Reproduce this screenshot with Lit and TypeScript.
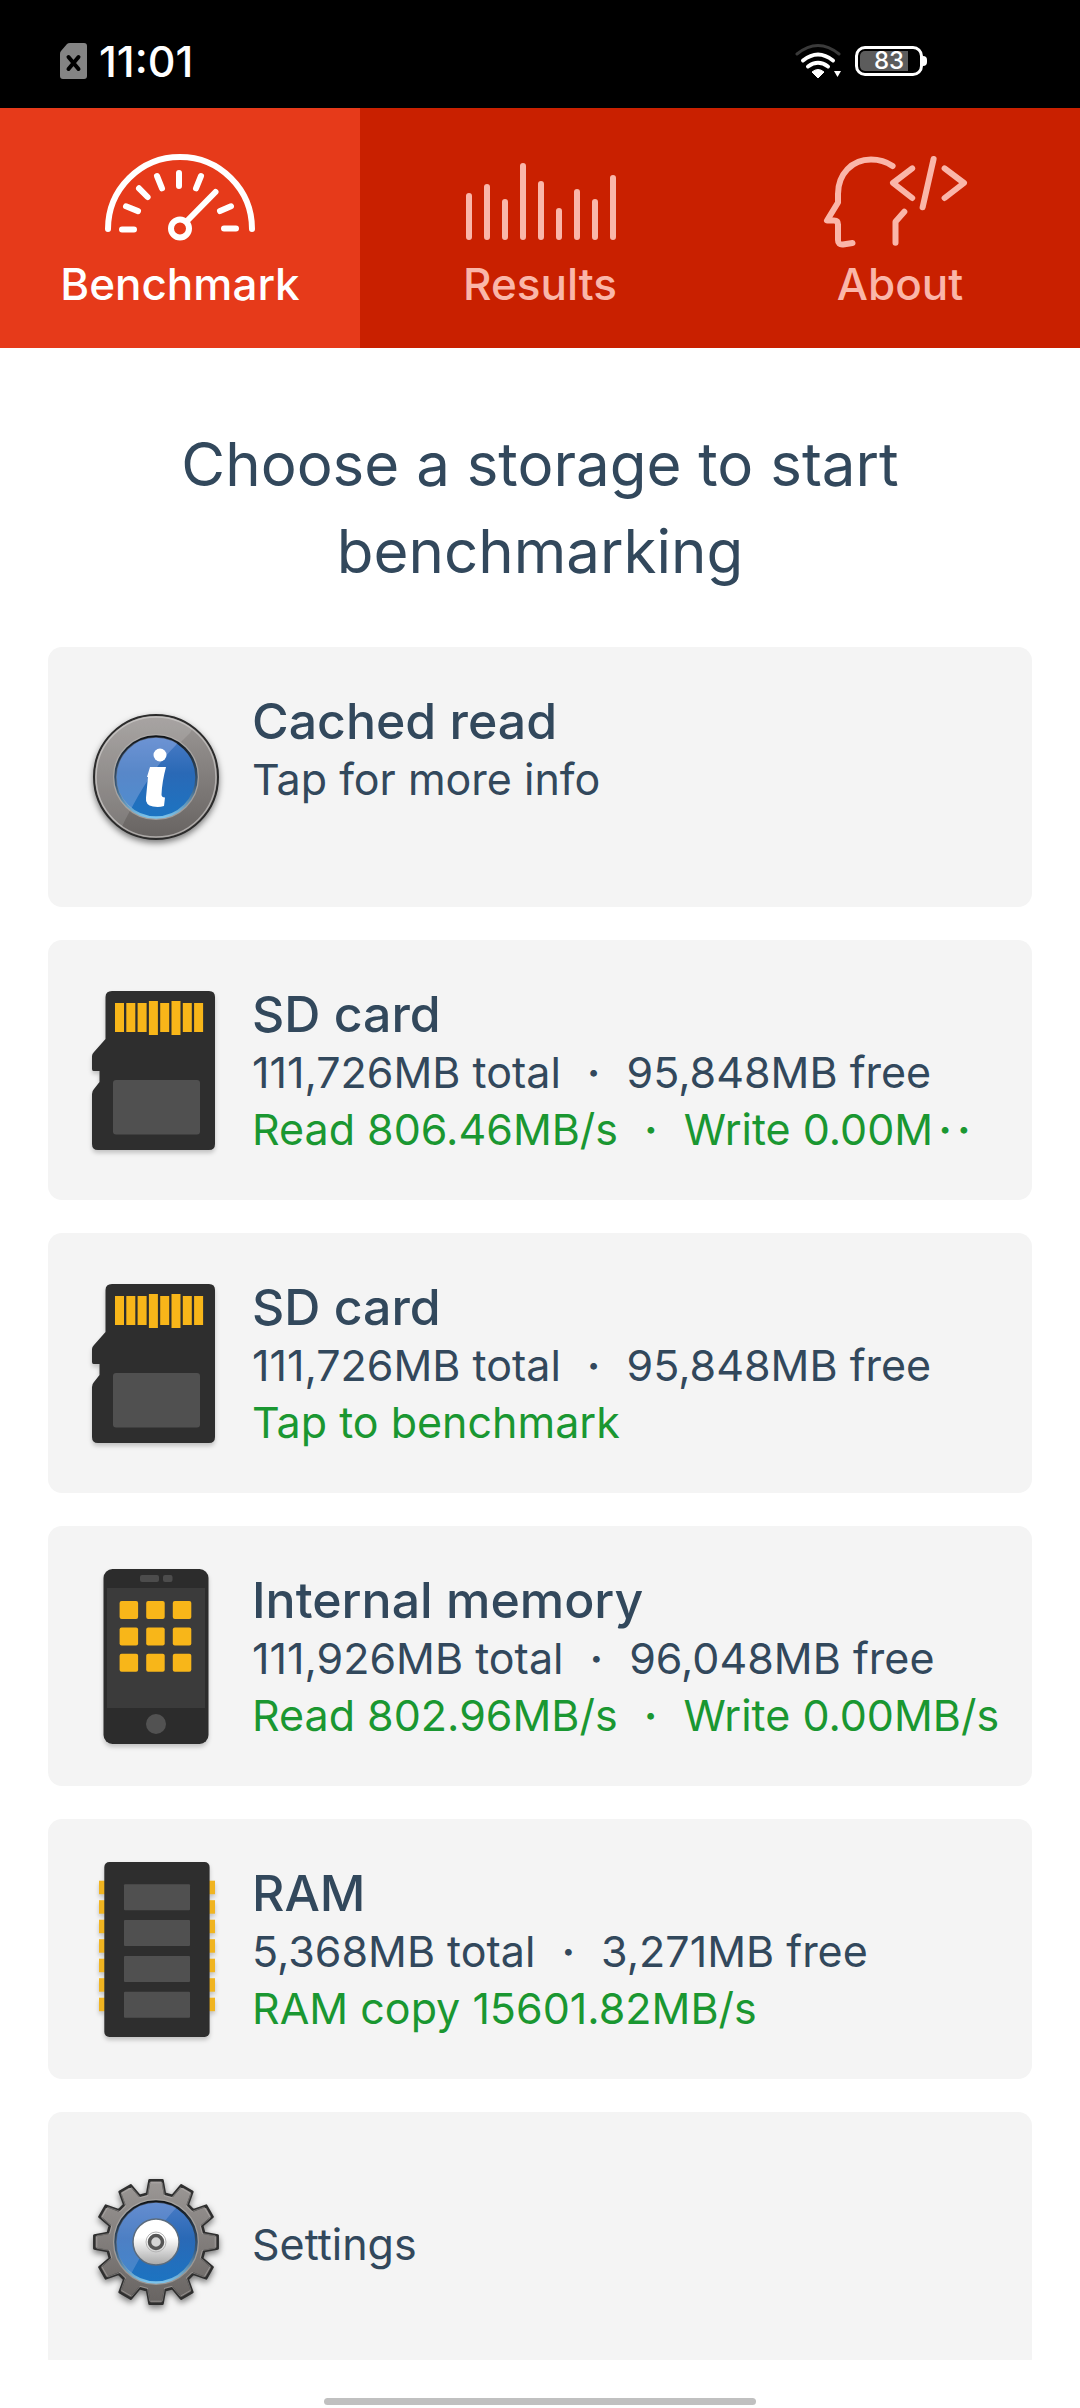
import { LitElement, html, svg, css, nothing } from "lit";
import type { SVGTemplateResult } from "lit";
import { customElement, property, state } from "lit/decorators.js";
import { classMap } from "lit/directives/class-map.js";

type IconName = "info" | "sd" | "phone" | "ram" | "gear";

interface StorageItem {
  icon: IconName;
  title?: string;
  detail: string[];
  result?: string[];
  clipped?: boolean;
}

const range = (n: number) => Array.from({ length: n }, (_, i) => i);

/* ---------- tab icons, 160 x 100 ---------- */

const gaugeIcon = svg`
  <path d="M8 79a72 72 0 0 1 144 0"/>
  <circle cx="80" cy="78.500" r="9"/>
  <path d="M86.500 71.500 115.500 42"/>
  <path d="M22 79.500h12M26 56.300l12 4.800M39 38.300l8.600 8.700M57 26l5 12.300M79 23v13M101 26l-5 12.300M131 56.300l-11 4.800M124 78.500h12"/>`;

const barTops = [46, 37, 52, 16, 34, 61, 42, 52, 28];
const barsIcon = svg`<path d=${barTops.map((top, i) => `M${9 + i * 18} ${top}V87`).join("")}/>`;

const aboutIcon = svg`
  <path d="M72.600 16C66 11.500 59 9.500 51 9.500 32 9.500 18 24 18 44v8.500L7 70.500h7q4 0 4 4V90q0 5 5 4.500l9.500-1.500"/>
  <path d="M84.300 61.700 75.500 71.700v21"/>
  <path d="M92.200 18.300 73 33l19.200 15M113.600 9 102.600 57.300M124.600 18.300 144 33l-19.400 15"/>`;

const tabs: { label: string; icon: SVGTemplateResult }[] = [
  { label: "Benchmark", icon: gaugeIcon },
  { label: "Results", icon: barsIcon },
  { label: "About", icon: aboutIcon },
];

/* ---------- card icons, 128 x 180 ---------- */

const metalDefs = svg`
  <defs>
    <linearGradient id="metal" x1="0" y1="0" x2="0" y2="1">
      <stop offset="0" stop-color="#9c9896"/><stop offset="1" stop-color="#676361"/>
    </linearGradient>
    <linearGradient id="blue" x1="0" y1="0" x2="0" y2="1">
      <stop offset="0" stop-color="#4a7cc6"/><stop offset=".45" stop-color="#2a69b6"/><stop offset="1" stop-color="#1c74c2"/>
    </linearGradient>
    <linearGradient id="rim" x1="0" y1="0" x2="0" y2="1">
      <stop offset="0" stop-color="#101418"/><stop offset=".6" stop-color="#3c5a78"/><stop offset="1" stop-color="#7cc4ec"/>
    </linearGradient>
    <linearGradient id="silver" x1="0" y1="0" x2="0" y2="1">
      <stop offset=".4" stop-color="#ffffff"/><stop offset="1" stop-color="#a8a8a8"/>
    </linearGradient>
    <clipPath id="disc"><circle cx="64" cy="90" r="40"/></clipPath>
    <clipPath id="face"><circle cx="64" cy="90" r="61"/></clipPath>
  </defs>`;

const infoIcon = svg`
  ${metalDefs}
  <circle cx="64" cy="90" r="62" fill="url(#metal)" stroke="#2b2b2b" stroke-width="2"/>
  <circle cx="64" cy="90" r="60" fill="none" stroke="#c9c6c4" stroke-opacity=".7" stroke-width="1.500"/>
  <path d="M0 20H112L98 46Q52 90 28 144L0 150Z" fill="#fff" fill-opacity=".13" clip-path="url(#face)"/>
  <circle cx="64" cy="90" r="42" fill="none" stroke="#b4b0ae" stroke-opacity=".7" stroke-width="2"/>
  <circle cx="64" cy="90" r="40.500" fill="url(#blue)" stroke="url(#rim)" stroke-width="2.500"/>
  <path d="M0 20H110L84 58Q58 84 36 128H0Z" fill="#b7c4f0" fill-opacity=".33" clip-path="url(#disc)"/>
  <circle cx="68" cy="68" r="6.500" fill="#fff"/>
  <path d="M58 80h16q-4 15-4.500 27.500 0 3 3.500 3l-1 8.500q-5 1.500-11 .5-8-1.500-7-9l2-20.500h-1z" fill="#fff"/>`;

const tooth = (deg: number) => {
  const at = (r: number, d: number) => {
    const a = ((deg + d) * Math.PI) / 180;
    return `${(64 + r * Math.sin(a)).toFixed(1)} ${(90 - r * Math.cos(a)).toFixed(1)}`;
  };
  return `${at(49, -10.5)}L${at(62, -6)}L${at(62, 6)}L${at(49, 10.5)}`;
};
const gearPath = `M${range(12).map((i) => tooth(i * 30)).join("L")}Z`;

const gearIcon = svg`
  ${metalDefs}
  <path d=${gearPath} fill="url(#metal)" stroke="#2f2f2f" stroke-width="2.500" stroke-linejoin="round"/>
  <path d=${gearPath} fill="none" stroke="#c4c1bf" stroke-opacity=".45" stroke-width="1" transform="translate(64 90) scale(.96) translate(-64 -90)"/>
  <circle cx="64" cy="90" r="42" fill="none" stroke="#b4b0ae" stroke-opacity=".6" stroke-width="2"/>
  <circle cx="64" cy="90" r="40.500" fill="url(#blue)" stroke="url(#rim)" stroke-width="2.500"/>
  <path d="M0 20H110L84 56Q58 84 36 128H0Z" fill="#b7c4f0" fill-opacity=".25" clip-path="url(#disc)"/>
  <circle cx="64" cy="90" r="23" fill="url(#silver)" stroke="#5b6b7c" stroke-width="1.500"/>
  <circle cx="64" cy="90" r="10" fill="none" stroke="#b5b5b5" stroke-width="1"/>
  <circle cx="64" cy="90" r="6.500" fill="#d4d4d4" stroke="#565656" stroke-width="3.500"/>`;

const sdIcon = svg`
  <path d="M20 11h97q6 0 6 6v147q0 6-6 6H6q-6 0-6-6v-50q0-3 2-5l5.500-7V91H1.500Q0 91 0 89V76q0-2 2-4l11.500-13V17q0-6 6.500-6z" fill="#2e2e2e"/>
  ${range(8).map((i) => {
    const tall = i === 3 || i === 5;
    return svg`<rect x=${23 + i * 11.3} y=${tall ? 21 : 23} width="9" height=${tall ? 34 : 29} fill="#f8b619"/>`;
  })}
  <rect x="21" y="100" width="87" height="54.500" rx="3" fill="#505050"/>`;

const phoneIcon = svg`
  <rect x="11.500" y="3" width="105" height="175" rx="9" fill="#2c2c2c"/>
  <rect x="15" y="22" width="98" height="120" fill="#3b3b3b"/>
  <rect x="48" y="9" width="19" height="7" rx="2" fill="#4c4c4c"/>
  <rect x="71" y="9" width="9.500" height="7" rx="2" fill="#4c4c4c"/>
  ${range(9).map(
    (i) => svg`<rect x=${27.6 + (i % 3) * 26.6} y=${35 + Math.floor(i / 3) * 26.4} width="18.500" height="18" rx="2" fill="#f8b619"/>`
  )}
  <circle cx="64" cy="158" r="10" fill="#525252"/>`;

const ramIcon = svg`
  ${range(7).map(
    (i) => svg`<rect x="7" y=${21.7 + i * 19.5} width="116" height="13.500" fill="#f0b420"/>`
  )}
  <rect x="12.300" y="3" width="105.300" height="175" rx="5" fill="#2e2e2e"/>
  ${range(4).map(
    (i) => svg`<rect x="32" y=${25.3 + i * 35.8} width="66" height="26" rx="1" fill="#505050"/>`
  )}`;

const cardIcons: Record<IconName, SVGTemplateResult> = {
  info: infoIcon,
  sd: sdIcon,
  phone: phoneIcon,
  ram: ramIcon,
  gear: gearIcon,
};

const items: StorageItem[] = [
  { icon: "info", title: "Cached read", detail: ["Tap for more info"] },
  {
    icon: "sd",
    title: "SD card",
    detail: ["111,726MB total", "95,848MB free"],
    result: ["Read 806.46MB/s", "Write 0.00M"],
    clipped: true,
  },
  {
    icon: "sd",
    title: "SD card",
    detail: ["111,726MB total", "95,848MB free"],
    result: ["Tap to benchmark"],
  },
  {
    icon: "phone",
    title: "Internal memory",
    detail: ["111,926MB total", "96,048MB free"],
    result: ["Read 802.96MB/s", "Write 0.00MB/s"],
  },
  {
    icon: "ram",
    title: "RAM",
    detail: ["5,368MB total", "3,271MB free"],
    result: ["RAM copy 15601.82MB/s"],
  },
  { icon: "gear", detail: ["Settings"] },
];

@customElement("status-bar")
export class StatusBar extends LitElement {
  static styles = css`
    :host {
      display: flex;
      align-items: center;
      justify-content: space-between;
      height: 108px;
      padding: 0 153px 0 60px;
      box-sizing: border-box;
      flex: none;
      background: #000;
      color: #fff;
      font-weight: 500;
    }
    .group {
      display: flex;
      align-items: center;
      gap: 12px;
      padding-top: 14px;
    }
    .sim {
      width: 27px;
      height: 36px;
    }
    .time {
      font-size: 43px;
      line-height: 48px;
    }
    .wifi {
      width: 48px;
      height: 36px;
    }
    .battery {
      display: flex;
      align-items: center;
    }
    .shell {
      width: 68px;
      height: 30px;
      box-sizing: border-box;
      border: 3px solid #fff;
      border-radius: 10px;
      padding: 2px;
      display: grid;
    }
    .level,
    .percent {
      grid-area: 1 / 1;
    }
    .level {
      background: #5c5c5c;
      border-radius: 5px 0 0 5px;
    }
    .percent {
      font-size: 24px;
      line-height: 20px;
      text-align: center;
    }
    .cap {
      width: 4px;
      height: 10px;
      background: #fff;
      border-radius: 0 4px 4px 0;
    }
  `;

  @property({ type: Number }) charge = 83;

  render() {
    return html`
      <div class="group">
        <svg class="sim" viewBox="0 0 27 36" aria-hidden="true">
          <path d="M10 0h14q3 0 3 3v30q0 3-3 3H3q-3 0-3-3V11q0-2 1-3l6-7q1-1 3-1z" fill="#848484" />
          <path d="M8.500 14l10 12M18.500 14l-10 12" stroke="#000" stroke-width="4" stroke-linecap="round" />
        </svg>
        <span class="time">11:01</span>
      </div>
      <div class="group">
        <svg class="wifi" viewBox="0 0 48 36" fill="none" aria-hidden="true">
          <path d="M2 11q21-17 42 0" stroke="#3a3a3a" stroke-width="3" stroke-linecap="round" />
          <path d="M8 17.500q15-12 30 0M13 23.500q10-7.500 20 0" stroke="#fff" stroke-width="4" stroke-linecap="round" />
          <path d="M17 29q6-5 12 0l-6 6z" fill="#fff" stroke="#fff" stroke-linejoin="round" />
          <path d="M39 28h7l-3.500 6z" fill="#fff" />
        </svg>
        <div class="battery">
          <div class="shell">
            <div class="level" style="width:${this.charge}%"></div>
            <span class="percent">${this.charge}</span>
          </div>
          <div class="cap"></div>
        </div>
      </div>
    `;
  }
}

@customElement("storage-card")
export class StorageCard extends LitElement {
  static styles = css`
    :host {
      display: block;
      flex: none;
    }
    .card {
      display: flex;
      gap: 32px;
      width: 100%;
      padding: 40px 32px 40px 44px;
      border: 0;
      border-radius: 14px;
      background: #f4f4f4;
      color: #32485c;
      font: inherit;
      text-align: left;
      cursor: pointer;
    }
    .icon {
      width: 128px;
      height: 180px;
      flex: none;
      overflow: visible;
    }
    .soft {
      filter: drop-shadow(0 3px 2px rgba(0, 0, 0, 0.2));
    }
    .strong {
      filter: drop-shadow(0 3px 3px rgba(0, 0, 0, 0.5));
    }
    .text {
      display: grid;
      grid-template-rows: 60px 57px 57px;
      padding-top: 4px;
      min-width: 0;
      white-space: nowrap;
    }
    .title {
      grid-row: 1;
      font-size: 50px;
      line-height: 60px;
      font-weight: 500;
    }
    .line {
      display: flex;
      gap: 26px;
      font-size: 43px;
      line-height: 57px;
    }
    .detail {
      grid-row: 2;
    }
    .result {
      grid-row: 3;
      color: #1a9731;
    }
    .value {
      display: flex;
      gap: 5px;
    }
    .dot {
      font-weight: 600;
    }
  `;

  @property({ attribute: false }) item!: StorageItem;

  private line(parts: string[], kind: string, clipped = false) {
    const last = parts.length - 1;
    const dot = html`<span class="dot">·</span>`;
    return html`<span class="line ${kind}">
      ${parts.map(
        (part, i) => html`${i > 0 ? dot : nothing}<span class="value"
            ><span>${part}</span>${clipped && i === last ? html`${dot}${dot}` : nothing}</span
          >`
      )}
    </span>`;
  }

  render() {
    const { icon, title, detail, result, clipped } = this.item;
    const round = icon === "info" || icon === "gear";
    return html`
      <button class="card" type="button">
        <svg class=${classMap({ icon: true, soft: !round, strong: round })} viewBox="0 0 128 180" aria-hidden="true">
          ${cardIcons[icon]}
        </svg>
        <span class="text">
          ${title ? html`<span class="title">${title}</span>` : nothing}
          ${this.line(detail, "detail")}
          ${result ? this.line(result, "result", clipped) : nothing}
        </span>
      </button>
    `;
  }
}

@customElement("app-root")
export class AppRoot extends LitElement {
  static styles = css`
    :host {
      display: flex;
      flex-direction: column;
      height: 100vh;
      background: #fff;
      color: #32485c;
      font-family: Inter, Roboto, "Liberation Sans", sans-serif;
    }
    .tabs {
      display: grid;
      grid-template-columns: repeat(3, 1fr);
      flex: none;
      background: #c92000;
    }
    .tab {
      display: flex;
      flex-direction: column;
      align-items: center;
      gap: 8px;
      height: 240px;
      padding: 42px 0 0;
      border: 0;
      background: none;
      color: #fab6a9;
      font: inherit;
      font-size: 44px;
      line-height: 52px;
      font-weight: 500;
      cursor: pointer;
    }
    .active {
      background: #e63a1a;
      color: #fff;
    }
    .tab-icon {
      width: 160px;
      height: 100px;
      fill: none;
      stroke: currentColor;
      stroke-width: 6;
      stroke-linecap: round;
      stroke-linejoin: round;
    }
    .content {
      display: flex;
      flex-direction: column;
      flex: 1;
      min-height: 0;
      overflow: hidden;
      padding: 73px 48px 0;
    }
    .heading {
      margin: 0 0 52px;
      padding: 0 96px;
      flex: none;
      font-size: 60px;
      line-height: 87px;
      font-weight: 400;
      text-align: center;
    }
    .list {
      display: flex;
      flex-direction: column;
      gap: 33px;
    }
    .home {
      display: flex;
      flex: none;
      justify-content: center;
      align-items: flex-end;
      height: 48px;
      padding-bottom: 3px;
      box-sizing: border-box;
    }
    .handle {
      width: 40%;
      height: 7px;
      border-radius: 4px;
      background: #c0c0c0;
    }
  `;

  @state() private active = 0;

  render() {
    return html`
      <status-bar></status-bar>
      <nav class="tabs">
        ${tabs.map(
          (tab, i) => html`
            <button
              type="button"
              class=${classMap({ tab: true, active: i === this.active })}
              @click=${() => (this.active = i)}
            >
              <svg class="tab-icon" viewBox="0 0 160 100" aria-hidden="true">${tab.icon}</svg>
              <span>${tab.label}</span>
            </button>
          `
        )}
      </nav>
      <main class="content">
        <h1 class="heading">Choose a storage to start benchmarking</h1>
        <div class="list">
          ${items.map((item) => html`<storage-card .item=${item}></storage-card>`)}
        </div>
      </main>
      <div class="home"><div class="handle"></div></div>
    `;
  }
}
